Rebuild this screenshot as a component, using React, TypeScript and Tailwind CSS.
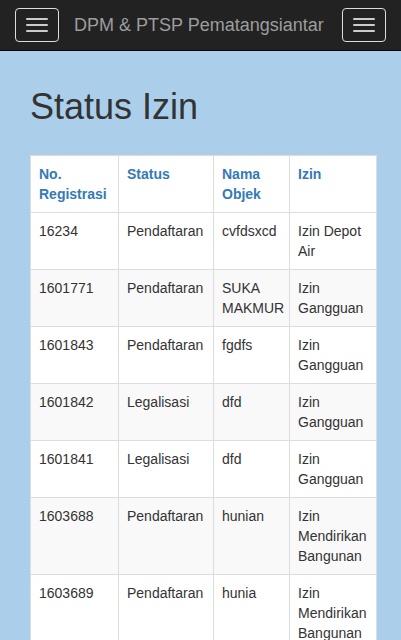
import React from "react";

const rows: [string, string, string, string[]][] = [
  ["16234", "Pendaftaran", "cvfdsxcd", ["Izin Depot", "Air"]],
  ["1601771", "Pendaftaran", "SUKA MAKMUR", ["Izin", "Gangguan"]],
  ["1601843", "Pendaftaran", "fgdfs", ["Izin", "Gangguan"]],
  ["1601842", "Legalisasi", "dfd", ["Izin", "Gangguan"]],
  ["1601841", "Legalisasi", "dfd", ["Izin", "Gangguan"]],
  ["1603688", "Pendaftaran", "hunian", ["Izin", "Mendirikan", "Bangunan"]],
  ["1603689", "Pendaftaran", "hunia", ["Izin", "Mendirikan", "Bangunan"]],
];

function Burger() {
  return (
    <button className="w-[44px] h-[34px] border border-[#dddddd] rounded-[4px] flex flex-col items-center justify-center gap-[4px]">
      <span className="block w-[22px] h-[2px] bg-[#cccccc] rounded-[1px]" />
      <span className="block w-[22px] h-[2px] bg-[#cccccc] rounded-[1px]" />
      <span className="block w-[22px] h-[2px] bg-[#cccccc] rounded-[1px]" />
    </button>
  );
}

export default function App() {
  return (
    <div
      className="w-[401px] h-[640px] overflow-hidden bg-[#abcfea] text-[#333333]"
      style={{ fontFamily: '"Liberation Sans", Arial, sans-serif' }}
    >
      <div className="h-[51px] bg-[#222222] border-b border-[#080808] flex items-center px-[15px]">
        <Burger />
        <div className="ml-[15px] text-[18px] leading-[20px] text-[#9d9d9d] flex-1">
          DPM &amp; PTSP Pematangsiantar
        </div>
        <Burger />
      </div>
      <div className="pl-[30px]">
        <h1 className="text-[36px] leading-[40px] font-normal mt-[36px] mb-[28px] text-[#333333]">
          Status Izin
        </h1>
        <table className="w-[346px] bg-white border border-[#dddddd] border-collapse text-[14px] leading-[20px] table-fixed">
          <colgroup>
            <col className="w-[88px]" />
            <col className="w-[95px]" />
            <col className="w-[76px]" />
            <col className="w-[87px]" />
          </colgroup>
          <tbody>
            <tr>
              {["No. Registrasi", "Status", "Nama Objek", "Izin"].map((h) => (
                <th
                  key={h}
                  className="border border-[#dddddd] p-[8px] text-left align-top font-bold text-[#337ab7]"
                >
                  {h === "No. Registrasi" ? (
                    <>
                      No.
                      <br />
                      Registrasi
                    </>
                  ) : h === "Nama Objek" ? (
                    <>
                      Nama
                      <br />
                      Objek
                    </>
                  ) : (
                    h
                  )}
                </th>
              ))}
            </tr>
            {rows.map((r, i) => (
              <tr key={i} className={i % 2 === 1 ? "bg-[#f9f9f9]" : "bg-white"}>
                <td className="border border-[#dddddd] p-[8px] align-top">{r[0]}</td>
                <td className="border border-[#dddddd] p-[8px] align-top">{r[1]}</td>
                <td className="border border-[#dddddd] p-[8px] align-top">
                  {r[2] === "SUKA MAKMUR" ? (
                    <>
                      SUKA
                      <br />
                      MAKMUR
                    </>
                  ) : (
                    r[2]
                  )}
                </td>
                <td className="border border-[#dddddd] p-[8px] align-top">
                  {r[3].map((l, j) => (
                    <div key={j}>{l}</div>
                  ))}
                </td>
              </tr>
            ))}
          </tbody>
        </table>
      </div>
    </div>
  );
}
